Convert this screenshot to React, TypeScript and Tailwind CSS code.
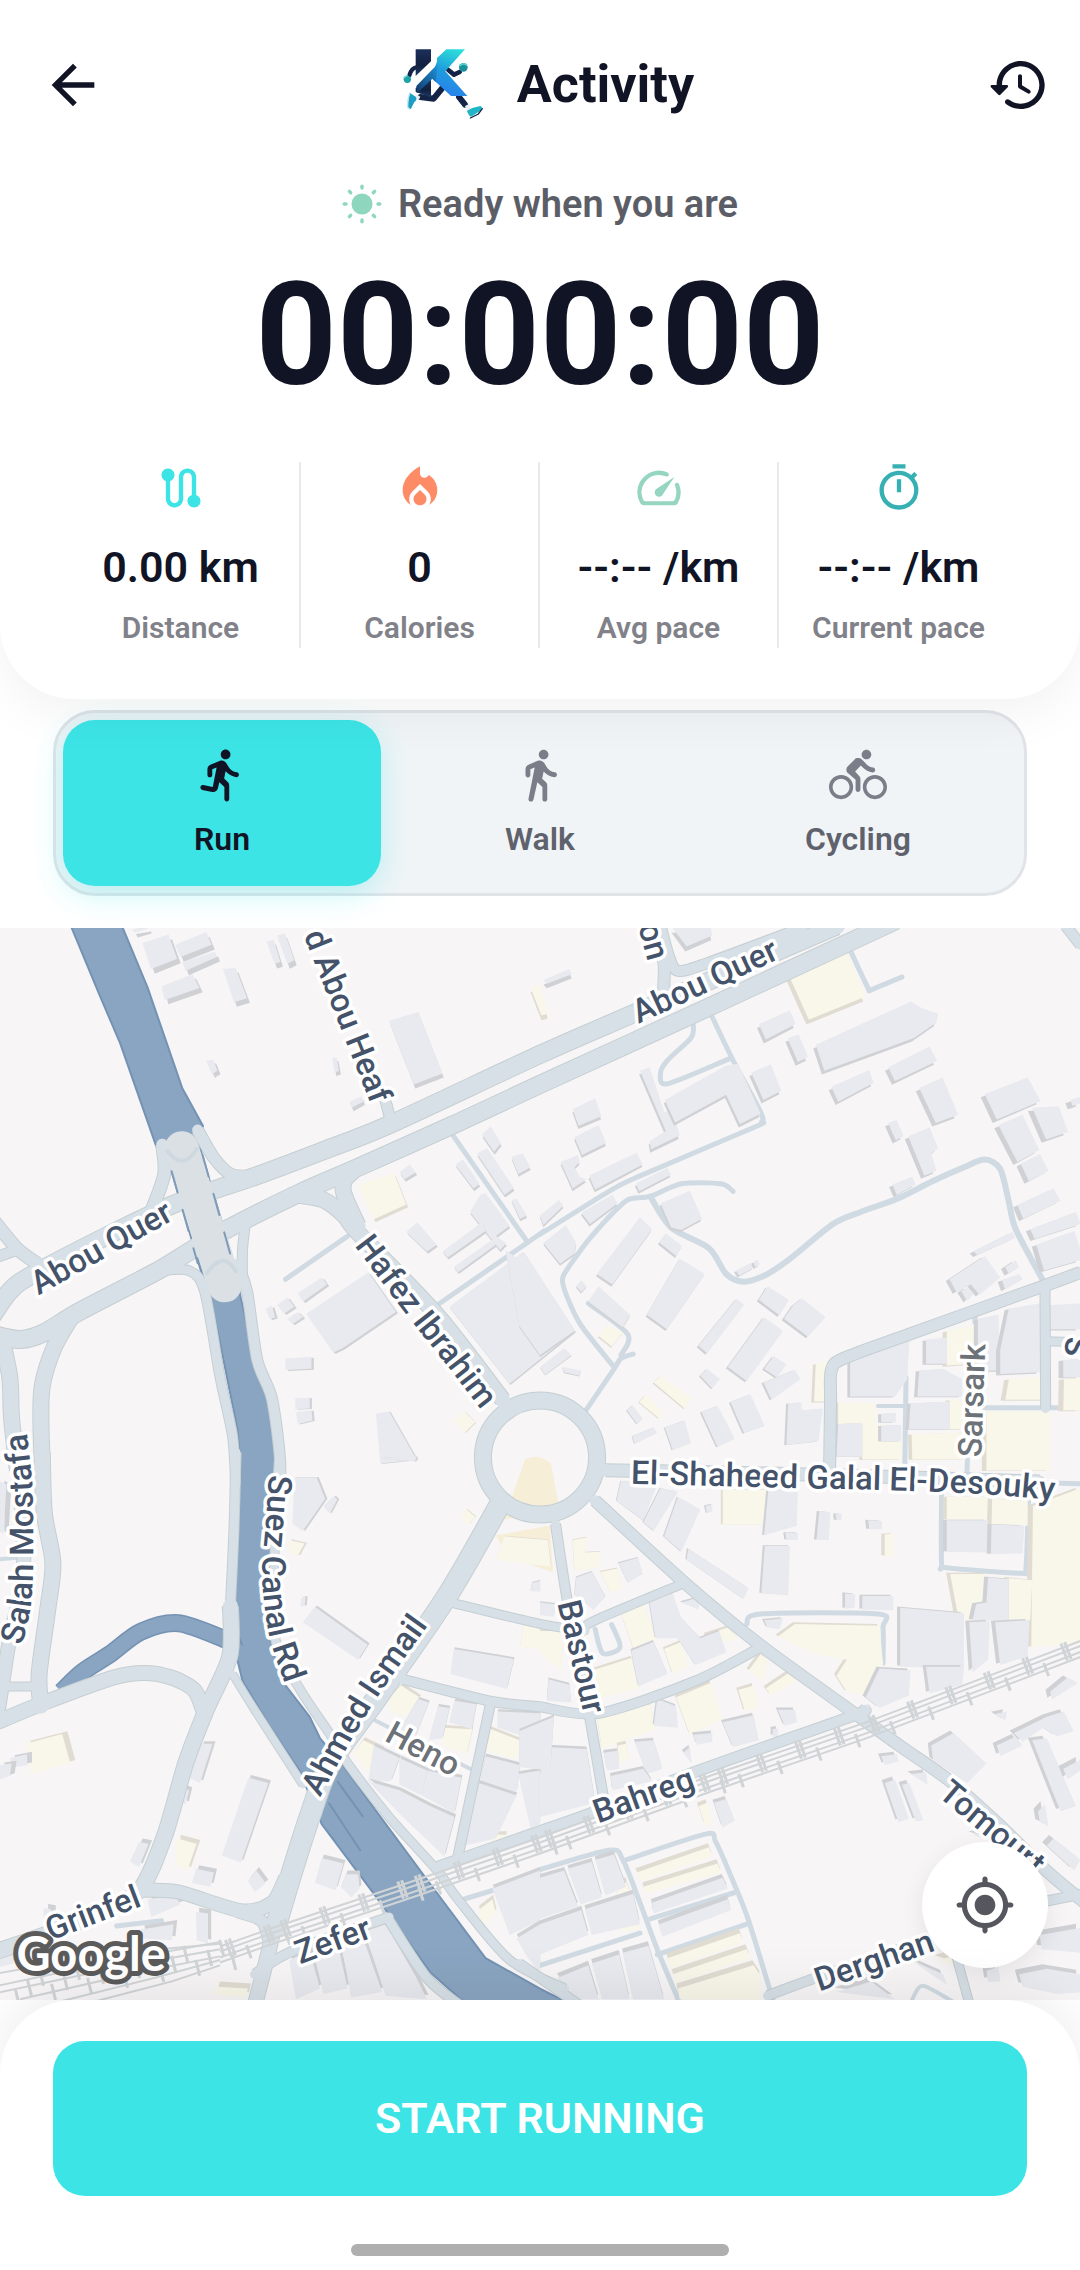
import React, { useState } from "react";
import { MdArrowBack, MdLocalFireDepartment, MdOutlineTimer, MdRoute } from "react-icons/md";

/* ---------- icons ---------- */

const glyphs = {
  history:
    "M13.26 3C8.17 2.86 4 6.95 4 12H2.21c-.45 0-.67.54-.35.85l2.79 2.8c.2.2.51.2.71 0l2.79-2.8c.31-.31.09-.85-.36-.85H6c0-3.9 3.18-7.05 7.1-7 3.72.05 6.85 3.18 6.9 6.9.05 3.91-3.1 7.1-7 7.1-1.61 0-3.1-.55-4.28-1.48-.4-.31-.96-.28-1.32.08-.42.42-.39 1.13.08 1.49C9 20.29 10.91 21 13 21c5.05 0 9.14-4.17 9-9.26-.13-4.69-4.05-8.61-8.74-8.74zm-.51 5c-.41 0-.75.34-.75.75v3.68c0 .35.19.68.49.86l3.12 1.85c.36.21.82.09 1.03-.26.21-.36.09-.82-.26-1.03l-2.88-1.71v-3.4c0-.4-.34-.74-.75-.74z",
  speed:
    "M19.46 10a1 1 0 0 0-.07 1 7.55 7.55 0 0 1 .52 1.81 8 8 0 0 1-.69 4.73 1 1 0 0 1-.89.53H5.68a1 1 0 0 1-.89-.54A8 8 0 0 1 13 6.06a7.69 7.69 0 0 1 2.11.56 1 1 0 0 0 1-.07 1 1 0 0 0-.17-1.76A10 10 0 0 0 3.35 19a2 2 0 0 0 1.72 1h13.85a2 2 0 0 0 1.74-1 10 10 0 0 0 .55-8.89 1 1 0 0 0-1.75-.11zM10.59 12.59a2 2 0 0 0 2.83 2.83l5.66-8.49z",
  locate:
    "M12 8c-2.21 0-4 1.79-4 4s1.79 4 4 4 4-1.79 4-4-1.79-4-4-4zm8.94 3c-.46-4.17-3.77-7.48-7.94-7.94V2c0-.55-.45-1-1-1s-1 .45-1 1v1.06C6.83 3.52 3.52 6.83 3.06 11H2c-.55 0-1 .45-1 1s.45 1 1 1h1.06c.46 4.17 3.77 7.48 7.94 7.94V22c0 .55.45 1 1 1s1-.45 1-1v-1.06c4.17-.46 7.48-3.77 7.94-7.94H22c.55 0 1-.45 1-1s-.45-1-1-1h-1.06zM12 19c-3.87 0-7-3.13-7-7s3.13-7 7-7 7 3.13 7 7-3.13 7-7 7z",
  run: "M13.49 5.48c1.1 0 2-.9 2-2s-.9-2-2-2-2 .9-2 2 .9 2 2 2zm-3.6 13.9l1-4.4 2.1 2v5c0 .55.45 1 1 1s1-.45 1-1v-5.64c0-.55-.22-1.07-.62-1.45l-1.48-1.41.6-3c1.07 1.24 2.62 2.13 4.36 2.41.6.09 1.14-.39 1.14-1 0-.49-.36-.9-.85-.98-1.52-.25-2.78-1.15-3.45-2.33l-1-1.6c-.4-.6-1-1-1.7-1-.3 0-.5.1-.8.1l-4 1.69c-.74.31-1.22 1.04-1.22 1.84v2.37c0 .55.45 1 1 1s1-.45 1-1v-2.4l1.8-.7-1.6 8.1-3.92-.8c-.54-.11-1.07.24-1.18.78v.04c-.11.54.24 1.07.78 1.18l4.11.82c1.06.21 2.1-.46 2.34-1.52z",
  walk: "M13.5 5.5c1.1 0 2-.9 2-2s-.9-2-2-2-2 .9-2 2 .9 2 2 2zM9.8 8.9L7.24 21.81c-.13.61.35 1.19.98 1.19h.08c.47 0 .87-.32.98-.78L10.9 15l2.1 2v5c0 .55.45 1 1 1s1-.45 1-1v-5.64c0-.55-.22-1.07-.62-1.45L12.9 13.5l.6-3c1.07 1.24 2.62 2.13 4.36 2.41.6.09 1.14-.39 1.14-1v-.03c0-.49-.36-.9-.84-.98-1.53-.25-2.79-1.16-3.46-2.33l-1-1.6c-.56-.89-1.68-1.25-2.66-.84L7.22 7.78C6.48 8.1 6 8.82 6 9.62V12c0 .55.45 1 1 1s1-.45 1-1V9.6l1.8-.7",
  cycle:
    "M15.5 5.5c1.1 0 2-.9 2-2s-.9-2-2-2-2 .9-2 2 .9 2 2 2zM5 12c-2.8 0-5 2.2-5 5s2.2 5 5 5 5-2.2 5-5-2.2-5-5-5zm0 8.5c-1.9 0-3.5-1.6-3.5-3.5s1.6-3.5 3.5-3.5 3.5 1.6 3.5 3.5-1.6 3.5-3.5 3.5zm5.8-10l2.4-2.4.8.8c1.06 1.06 2.38 1.78 3.96 2.02.6.09 1.14-.39 1.14-1 0-.49-.37-.91-.85-.99-1.11-.18-2.02-.71-2.75-1.43l-1.9-1.9c-.5-.4-1-.6-1.6-.6s-1.1.2-1.4.6L7.8 8.4c-.4.4-.6.9-.6 1.4 0 .6.2 1.1.6 1.4L11 14v4c0 .55.45 1 1 1s1-.45 1-1v-4.26c0-.55-.22-1.07-.62-1.45L10.8 10.5zM19 12c-2.8 0-5 2.2-5 5s2.2 5 5 5 5-2.2 5-5-2.2-5-5-5zm0 8.5c-1.9 0-3.5-1.6-3.5-3.5s1.6-3.5 3.5-3.5 3.5 1.6 3.5 3.5-1.6 3.5-3.5 3.5z",
};

function Glyph({ name, className }: { name: keyof typeof glyphs; className: string }) {
  return (
    <svg viewBox="0 0 24 24" fill="currentColor" aria-hidden="true" className={className}>
      <path d={glyphs[name]} />
    </svg>
  );
}

function Sun() {
  return (
    <svg viewBox="0 0 40 40" aria-hidden="true" className="size-10 text-[#8fd6bf]">
      <circle cx="20" cy="20" r="10.5" fill="currentColor" />
      {[0, 45, 90, 135, 180, 225, 270, 315].map((a) => (
        <path key={a} d="M20 2.2V4" stroke="currentColor" strokeWidth="3.4" strokeLinecap="round" transform={`rotate(${a} 20 20)`} />
      ))}
    </svg>
  );
}

function Logo() {
  return (
    <svg viewBox="36 31 276 276" role="img" aria-label="K runner logo" className="size-23">
      <defs>
        <linearGradient id="kStem" x1="0" y1="0" x2="0" y2="1">
          <stop offset="0" stopColor="#1b2f5a" />
          <stop offset="0.6" stopColor="#12203f" />
          <stop offset="1" stopColor="#1d3c68" />
        </linearGradient>
        <linearGradient id="kArm" gradientUnits="userSpaceOnUse" x1="220" y1="62" x2="170" y2="205">
          <stop offset="0" stopColor="#2ee0da" />
          <stop offset="0.5" stopColor="#1f9bdc" />
          <stop offset="1" stopColor="#2b7df0" />
        </linearGradient>
        <linearGradient id="kTail" gradientUnits="userSpaceOnUse" x1="95" y1="190" x2="165" y2="125">
          <stop offset="0" stopColor="#123a6b" />
          <stop offset="1" stopColor="#1d8fd6" />
        </linearGradient>
      </defs>
      <g fill="none" strokeLinecap="round" strokeLinejoin="round" stroke="#142447">
        <path d="M94 116 Q80 118 73 140" strokeWidth="13" />
        <path d="M190 124 L207 138 L224 130" strokeWidth="14" />
        <path d="M172 178 L146 210 L106 205" strokeWidth="18" />
        <path d="M222 205 L240 228" strokeWidth="18" />
      </g>
      <path d="M92 62H138V98L92 142Z" fill="url(#kStem)" />
      <path d="M92 178L138 150V206L92 190Z" fill="url(#kStem)" />
      <path d="M92 150L152 92V112L92 170Z" fill="#ffffff" />
      <path d="M156 98V88L184 62H240L181 128L247 202H198L142 150L150 116Z" fill="url(#kArm)" />
      <path d="M94 172L158 106L152 160L142 150L96 194Z" fill="url(#kTail)" />
      <circle cx="67" cy="152" r="11" fill="#1fa3a8" />
      <path d="M57 146L66 140" stroke="#7fe3de" strokeWidth="5" strokeLinecap="round" />
      <circle cx="235" cy="116" r="13" fill="#1b8f9c" />
      <path d="M226 110Q234 102 244 109" stroke="#52d5cf" strokeWidth="5" fill="none" strokeLinecap="round" />
      <path d="M94 197L106 204L101 214L88 210Z" fill="#e9eef3" />
      <path d="M74 192L92 204Q98 214 88 220L78 240Q66 244 68 228Z" fill="#1f9ec4" />
      <path d="M74 192Q66 214 68 236L74 242" stroke="#bfeaf4" strokeWidth="4" fill="none" />
      <path d="M240 232L252 226L258 238L246 246Z" fill="#e9eef3" />
      <path d="M246 246L262 238L286 232Q296 236 286 246L258 264Q250 260 246 246Z" fill="#1fb5c6" />
      <path d="M256 268L280 256L292 240" stroke="#142447" strokeWidth="4" fill="none" strokeLinecap="round" />
    </svg>
  );
}

/* ---------- map ---------- */

/* Map tiles: origin and scale of each tile's own units in map pixels. */
type Tile = "a" | "b" | "c" | "d";
const K = 540 / 1568;
const tiles: Record<Tile, [number, number, number, number]> = {
  a: [0, 920, K, K],
  b: [540, 920, K, K],
  c: [0, 1460, K, 1 / 2.8],
  d: [540, 1460, K, 1 / 2.8],
};

type Pt = [number, number];

function pts(tile: Tile, src: string): Pt[] {
  const [ox, oy, sx, sy] = tiles[tile];
  return src
    .trim()
    .split(/\s+/)
    .map((p) => {
      const [x, y] = p.split(",").map(Number);
      return [Math.round((ox + x * sx) * 10) / 10, Math.round((oy + y * sy) * 10) / 10];
    });
}

function line(p: Pt[]) {
  return "M" + p.map((q) => q.join(" ")).join("L");
}

/* Catmull-Rom spline through the points. */
function curve(p: Pt[]) {
  if (p.length < 3) return line(p);
  let d = `M${p[0][0]} ${p[0][1]}`;
  for (let i = 0; i < p.length - 1; i++) {
    const a = p[i - 1] ?? p[i];
    const b = p[i];
    const c = p[i + 1];
    const e = p[i + 2] ?? c;
    d += `C${b[0] + (c[0] - a[0]) / 7} ${b[1] + (c[1] - a[1]) / 7} ${c[0] - (e[0] - b[0]) / 7} ${c[1] - (e[1] - b[1]) / 7} ${c[0]} ${c[1]}`;
  }
  return d;
}

const roads: [Tile, number, string][] = [
  ["a", 17, "-20,1150 30,1080 90,1035 300,925 500,830 620,787 740,747 940,672 1130,597 1568,393 1850,270 2428,20"],
  ["a", 17, "-20,1205 60,1220 130,1200 230,1140 460,1020 550,965 650,905 870,795 1030,725 1310,600 1568,480 2070,250 2600,5"],
  ["a", 11, "575,612 620,690 670,740 740,747"],
  ["a", 12, "472,655 478,740 440,850"],
  ["a", 15, "860,800 940,815 1000,860 1040,910 1270,1150 1460,1395"],
  ["a", 15, "1030,728 1000,760 1000,800 1040,890"],
  ["a", 9, "715,870 705,960 705,1040"],
  ["a", 10, "690,1000 718,1080 748,1280 790,1390 814,1568 812,1700"],
  ["a", 9, "470,1020 550,1020 595,1080 640,1330 676,1500 685,1640"],
  ["a", 10, "1118,520 1135,585"],
  ["a", 12, "-20,870 50,955 110,1000"],
  ["a", 10, "-20,985 50,960"],
  ["a", 15, "8,1225 30,1330 35,1450 52,1600"],
  ["a", 15, "215,1145 160,1240 125,1350 120,1450 125,1600"],
  ["b", 10, "350,20 375,110 400,150 480,130 760,26"],
  ["b", 11, "340,60 360,130 358,215"],
  ["b", 11, "1568,1025 1460,1065 1070,1205 880,1275 845,1310 843,1400 840,1600"],
  ["b", 9, "1465,1060 1467,1420"],
  ["b", 8, "1467,1225 1580,1228"],
  ["b", 10, "1525,20 1568,75"],
  ["c", 15, "124,-20 130,150 155,290 140,420 115,600 120,690"],
  ["c", 13, "52,-20 70,300 30,500 10,620 -10,740"],
  ["c", 8, "20,635 110,635"],
  ["c", 14, "-20,740 130,680 330,610 420,597 500,610 565,645 590,700"],
  ["c", 9, "686,-20 680,200 670,410"],
  ["c", 15, "670,410 668,550 600,700 540,850 480,1050 410,1200 300,1265 130,1330 -20,1380"],
  ["c", 7, "676,600 740,700 880,910"],
  ["c", 8, "812,-20 800,200 800,500 870,640 960,770 1010,850 1130,1000 1270,1150 1330,1230 1480,1400 1640,1480"],
  ["c", 20, "1455,120 1300,380 1100,660 960,850 900,1000 850,1150 800,1310"],
  ["c", 14, "800,1290 780,1380 740,1530"],
  ["c", 13, "420,1205 520,1210 700,1262 790,1240 830,1170"],
  ["c", 11, "690,1265 760,1290 780,1340"],
  ["c", 8, "1310,400 1568,460 1700,480"],
  ["c", 9, "1170,615 1420,675 1568,692"],
  ["c", 9, "1425,680 1330,1110"],
  ["c", 10, "1270,1140 1568,1040 1728,985 2030,870 2468,720 2510,700"],
  ["c", 9, "1130,1290 1240,1450 1340,1530"],
  ["c", 9, "740,1440 850,1375 1130,1280"],
  ["d", 12, "190,30 700,40 1450,62"],
  ["d", 11, "160,115 420,345 640,520 920,715 1050,805 1190,900 1330,1020 1480,1160 1600,1255"],
  ["d", 9, "45,180 80,400 140,700 185,950"],
  ["d", 8, "420,345 160,450 120,478"],
  ["d", 9, "640,525 450,620 170,710 0,692"],
  ["d", 9, "1470,1235 1600,1210"],
  ["d", 9, "660,1500 800,1450 1180,1325"],
  ["d", 8, "1205,1380 1245,1520"],
  ["d", 9, "-60,1410 120,1530"],
];

const lanes: [Tile, number, string][] = [
  ["a", 5, "830,1045 1010,920"],
  ["a", 5, "1310,620 1530,935"],
  ["a", 5, "1270,1120 1530,940 1580,905"],
  ["b", 5, "500,285 560,410 640,560 643,588 620,605 290,745 200,790 0,915"],
  ["b", 5, "445,310 438,345 370,410 350,445 370,478 550,405"],
  ["b", 5, "895,80 925,145 955,208"],
  ["b", 5, "955,208 1050,168"],
  ["b", 5, "560,790 525,768 410,768 320,805 270,810 240,825 150,920 90,1000 65,1045 80,1100 120,1180 215,1300"],
  ["b", 6, "320,805 380,895 490,955 540,1030 590,1052 650,1035 720,990 850,885 930,850 1040,810 1140,760 1230,720 1290,698 1335,725 1360,820 1380,900 1460,1050"],
  ["b", 5, "270,1262 235,1275 215,1305 130,1430"],
  ["b", 5, "235,1265 255,1205 140,1115"],
  ["b", 5, "1290,1418 1580,1418"],
  ["b", 4, "980,1413 1055,1413"],
  ["b", 5, "1262,1150 1262,1170"],
  ["b", 5, "1062,1330 1058,1600"],
  ["b", 5, "1240,1568 1238,1620"],
  ["c", 4, "1090,730 1365,865"],
  ["c", 5, "1330,1235 1568,1165"],
  ["c", 5, "340,1305 470,1290"],
  ["c", 4, "-10,280 50,275"],
  ["d", 5, "1450,65 1580,68"],
  ["d", 4, "0,460 130,480"],
  ["d", 5, "160,475 182,542 232,525 208,462"],
  ["d", 5, "600,460 640,432 980,432 995,470 995,570"],
  ["d", 5, "1165,90 1165,290 1180,303 1395,318 1410,300 1417,110"],
  ["d", 5, "-10,1150 200,1093 240,1120 290,1240 340,1370 405,1520"],
  ["d", 5, "250,1120 480,1048 510,1070 560,1180 605,1290 675,1510"],
  ["d", 5, "320,1285 570,1210"],
  ["d", 5, "340,1385 600,1300"],
  ["d", 5, "0,1415 290,1325"],
  ["d", 4, "1080,1510 1110,1472 1195,1515"],
];

const greyBlocks: [Tile, string[]][] = [
  [
    "a",
    [
      "415,70 490,45 515,115 440,145", "510,75 600,38 615,75 525,110", "530,125 625,95 630,110 540,150", "470,195 560,160 580,200 480,235",
      "648,145 685,142 718,230 680,242", "775,65 795,60 815,125 798,130", "805,48 828,42 855,120 835,130", "385,30 430,22 430,28 390,40",
      "1130,295 1215,270 1285,448 1202,480", "600,412 620,408 632,440 616,450", "965,405 978,402 985,440 972,446", "1015,530 1050,515 1055,530 1022,548",
      "1400,625 1425,602 1455,650 1435,675", "1385,680 1415,665 1492,780 1465,800", "1485,690 1518,680 1540,720 1505,740", "1322,712 1345,698 1392,768 1375,782",
      "1160,735 1190,712 1208,735 1175,755", "1395,800 1410,796 1480,890 1440,920 1470,940 1452,960 1365,850", "1180,908 1212,880 1268,945 1240,965", "1285,965 1400,880 1410,905 1300,982",
      "1318,1010 1430,930 1440,945 1330,1025", "1485,815 1500,812 1530,860 1510,870", "865,1085 935,1040 950,1060 880,1110", "805,1120 835,1098 855,1125 825,1145",
      "835,1160 865,1140 880,1155 850,1175", "772,1130 790,1122 800,1155 783,1160", "890,1145 1070,1025 1150,1140 995,1245 968,1258", "1305,1125 1520,965 1670,1195 1480,1348",
      "830,1275 905,1270 905,1305 830,1308", "858,1390 900,1388 900,1420 858,1422", "860,1430 905,1425 908,1455 865,1465", "1092,1435 1130,1428 1210,1568 1105,1580",
    ],
  ],
  [
    "b",
    [
      "385,26 495,26 500,48 425,80", "10,178 85,145 92,160 20,188", "635,305 725,265 742,305 655,350", "718,345 750,335 778,400 748,415",
      "800,365 1075,240 1110,260 1155,275 1150,300 1085,345 825,440", "1010,430 1130,370 1152,412 1030,470", "845,487 955,438 968,475 865,530", "1100,490 1168,460 1213,568 1148,592",
      "613,445 670,422 700,498 648,525", "290,440 318,430 360,560 385,555 405,628 322,668 318,645 365,615", "362,525 540,425 575,420 640,565 580,595 540,510 392,590", "95,552 160,520 178,572 112,600",
      "100,632 170,598 192,650 122,685", "60,705 110,685 115,705 100,720 115,748 135,755 95,782", "142,745 280,678 298,712 160,785", "278,768 370,722 380,742 288,790",
      "0,860 55,815 68,832 10,888", "120,852 210,800 225,825 145,885", "10,940 75,888 105,940 100,970 58,1000", "350,825 435,788 470,870 410,902 380,895",
      "290,865 325,900 210,1060 165,1030", "345,938 365,912 412,948 395,978", "405,985 478,1030 368,1190 310,1148", "-100,960 0,1040 100,1195 0,1265 -60,1180",
      "105,1065 120,1048 135,1065 120,1082", "140,1110 170,1065 262,1150 240,1185", "570,1102 592,1120 485,1260 460,1238", "650,1155 705,1195 600,1340 545,1300",
      "660,1065 722,1105 695,1150 635,1105", "735,1120 760,1100 828,1155 778,1212 708,1160", "0,1300 70,1245 92,1265 15,1322", "65,1300 120,1310 115,1325 70,1315",
      "568,1020 610,998 620,1012 578,1035", "618,995 630,988 638,1002 625,1010", "650,1305 678,1268 715,1292 688,1330", "648,1345 740,1308 755,1335 672,1395",
      "465,1325 485,1305 522,1335 500,1362", "553,1402 610,1378 652,1470 592,1492", "468,1430 515,1412 565,1508 515,1532", "362,1475 420,1455 438,1520 385,1540",
      "252,1425 268,1410 298,1450 282,1465", "268,1500 330,1475 340,1490 275,1522", "720,1405 758,1402 760,1425 820,1420 808,1515 715,1525", "900,1270 1072,1215 1065,1335 1030,1385 900,1385",
      "1010,592 1035,583 1055,630 1032,642", "1068,630 1130,605 1155,665 1135,680 1150,730 1115,745", "1022,770 1080,748 1090,770 1035,800", "1290,508 1415,460 1452,528 1325,582",
      "1330,598 1400,568 1448,670 1385,705", "1395,710 1450,682 1475,730 1418,760", "1428,548 1505,543 1532,618 1468,640", "1385,830 1490,782 1510,818 1402,870",
      "1422,900 1555,850 1568,885 1435,928", "1440,945 1550,905 1568,960 1568,990 1462,1020", "1258,965 1370,908 1378,925 1268,975", "1188,1045 1290,978 1335,1040 1275,1090 1250,1060 1208,1082",
      "1350,1010 1380,990 1390,1010 1360,1030", "1340,1048 1390,1030 1400,1045 1350,1075", "1222,1080 1240,1068 1258,1088 1240,1108", "1270,1160 1330,1148 1335,1310 1270,1310",
      "1360,1130 1452,1115 1452,1315 1335,1320 1335,1250", "1120,1220 1180,1215 1180,1290 1120,1290", "1100,1310 1170,1305 1225,1335 1225,1385 1095,1385", "1075,1405 1188,1400 1188,1480 1070,1480",
      "990,1435 1032,1432 1032,1460 990,1460", "865,1465 935,1462 935,1560 860,1560", "990,1470 1048,1468 1048,1515 990,1515", "1480,1120 1568,1115 1568,1190 1478,1190",
      "1518,1280 1568,1275 1568,1330 1518,1330", "1538,525 1568,515 1568,535 1545,542",
    ],
  ],
  [
    "c",
    [
      "855,50 920,50 945,110 880,200 850,180", "940,130 970,102 980,112 958,152", "915,412 1068,518 1040,560 880,455", "875,388 888,385 885,412 873,410",
      "1318,530 1492,558 1472,642 1308,600", "1105,-5 1210,-8 1205,5", "585,795 618,795 582,905 548,890", "525,915 550,925 540,965 512,950",
      "722,890 780,905 700,1128 645,1108", "405,1070 432,1075 405,1140 378,1125", "570,1145 622,1155 612,1195 558,1185", "720,1180 745,1150 772,1185 742,1210",
      "935,1115 998,1130 975,1205 915,1185", "1005,1160 1040,1160 1045,1200 1020,1225 990,1195", "430,1230 510,1220 525,1245 440,1280", "570,1265 605,1270 605,1355 572,1345",
      "410,1315 505,1300 500,1345 415,1340", "30,835 80,825 80,855 35,862", "0,855 35,850 30,885 0,895", "1215,670 1245,680 1200,790 1160,760",
      "1272,690 1305,695 1285,780 1245,785", "1320,675 1383,685 1370,755 1305,735", "1085,800 1160,835 1135,900 1070,900", "1160,835 1240,870 1225,940 1160,910", "1240,870 1340,890 1320,990 1225,940",
      "1070,900 1160,925 1250,970 1320,1000 1290,1110 1160,990", "1445,705 1568,710 1568,790 1445,750",
      "1410,830 1510,855 1500,930 1395,900", "1390,905 1500,940 1440,1060 1350,1080 1370,960", "1505,880 1568,870 1568,1020 1540,1030", "1430,1200 1568,1150 1568,1290 1480,1330", "1500,1340 1568,1300 1568,1440 1530,1390",
      "840,1400 900,1375 930,1480 860,1510", "910,1375 980,1350 1010,1480 940,1495", "990,1345 1050,1325 1110,1490 1020,1505", "1060,1320 1120,1300 1210,1450 1240,1510 1120,1500",
      "0,60 20,70 12,210 0,200", "128,1255 150,1258 150,1285 128,1285", "0,1390 40,1380 40,1410 0,1420", "1545,345 1568,340 1568,370 1540,368",
    ],
  ],
  [
    "d",
    [
      "235,60 340,70 300,170 222,115", "350,80 400,90 330,200 300,175", "400,105 465,140 410,258 360,215", "665,60 748,80 745,185 650,212", "810,145 842,148 838,225 802,225",
      "712,205 748,205 748,225 715,225", "480,130 500,125 500,145 485,150", "858,152 875,152 875,170 860,170", "952,170 992,172 992,195 955,195",
      "652,242 725,242 720,380 642,375", "430,250 605,360 590,390 425,280", "105,330 150,315 190,385 155,420 100,380", "228,290 285,275 298,320 255,345",
      "315,385 385,375 410,445 465,500 520,480 540,540 450,575 400,500 335,500", "265,535 330,510 370,600 285,635", "410,400 465,385 460,420", "1180,170 1300,170 1300,260 1180,258",
      "1310,182 1405,185 1400,262 1308,265", "1300,330 1360,335 1360,450 1255,450 1265,405 1295,400", "1045,415 1230,430 1230,585 1045,580", "985,585 1075,590 1070,660 985,695 945,665",
      "1120,580 1230,580 1225,630 1130,655", "1245,455 1305,452 1300,560 1255,595", "1320,455 1420,450 1415,550 1335,575", "885,375 915,378 912,415 885,418",
      "935,382 1025,382 1025,422 935,420", "650,450 705,445 695,475 660,470", "25,615 85,630 90,680 20,675", "340,670 395,690 400,750 330,745",
      "530,735 620,715 635,785 560,805", "690,700 740,700 745,735 710,745", "675,755 690,752 692,778 675,775", "445,770 500,765 500,790 455,798",
      "275,790 330,785 355,865 310,880", "185,820 225,815 230,865 195,870", "205,885 300,865 325,900 210,925", "415,820 435,805 440,850",
      "25,805 135,810 160,960 0,1000 0,880", "-60,760 40,720 30,870 -60,860", "505,960 540,950 565,1010 530,1030", "1135,800 1200,765 1295,850 1240,905 1140,840",
      "1320,712 1355,705 1350,730", "1480,650 1530,610 1560,625 1485,672", "1325,800 1380,775 1400,800 1335,830", "1375,765 1470,720 1520,705 1548,760 1500,775 1460,750 1400,790",
      "1428,785 1470,780 1555,970 1510,985", "1518,865 1568,840 1568,870 1530,895", "1000,905 1030,895 1070,1005 1040,1015", "1050,910 1072,905 1112,1010 1090,1012",
      "1075,880 1120,875 1125,910", "990,830 1035,825 1040,845 1000,855", "1445,985 1465,965 1475,1025 1450,1015", "1470,1080 1490,1060 1568,1120 1550,1150",
      "1255,1050 1275,1045 1290,1060", "1450,1330 1568,1310 1568,1380 1455,1370", "1390,1440 1470,1425 1568,1440 1568,1490 1500,1495 1400,1475", "1295,1430 1330,1420 1335,1460 1300,1462",
      "0,1170 70,1150 110,1250 0,1285", "80,1145 150,1125 180,1225 118,1245", "160,1120 215,1105 250,1195 190,1220", "0,1300 120,1260 140,1330 0,1385", "130,1258 270,1215 290,1300 150,1330",
      "50,1450 140,1415 170,1510 90,1510", "150,1410 230,1385 260,1510 180,1510", "240,1380 315,1360 360,1510 270,1510", "325,1240 530,1170 545,1200 330,1270", "345,1300 545,1230 555,1260 355,1335",
      "860,1490 960,1460 1030,1510", "1075,1400 1170,1440 1180,1470", "0,400 45,405 40,440 0,435",
    ],
  ],
];

const creamBlocks: [Tile, string[]][] = [
  ["a", ["1040,770 1145,738 1180,828 1085,872", "1315,1455 1350,1430 1380,1460 1350,1490", "1540,198 1568,190 1590,275 1572,280"]],
  [
    "b",
    [
      "715,148 885,85 945,225 780,292", "170,1210 195,1178 240,1200 208,1240", "330,1345 350,1325 440,1390 420,1420", "288,1402 305,1380 358,1430 345,1448",
      "800,1290 845,1280 843,1400 795,1400", "865,1402 975,1405 975,1465 1048,1470 1048,1568 935,1568 935,1465 865,1465", "1180,1195 1262,1180 1262,1290 1180,1295", "1188,1395 1230,1395 1230,1480 1188,1480",
      "1078,1495 1235,1490 1235,1568 1080,1568", "1360,1335 1480,1325 1480,1395 1350,1395", "1295,1428 1480,1428 1480,1600 1295,1600", "1520,1335 1568,1330 1568,1425 1518,1425",
    ],
  ],
  [
    "c",
    [
      "75,795 182,768 205,848 92,880", "515,1060 572,1075 545,1150 510,1130", "1335,160 1355,140 1380,160 1360,182", "1140,655 1165,632 1218,665 1180,720 1125,700",
      "1055,785 1110,810 1065,875 1028,820", "1290,750 1372,755 1355,825 1285,800", "1415,750 1520,790 1500,840 1400,810", "1520,460 1568,460 1568,530 1510,525",
      "840,225 885,235 865,270 840,260", "1430,1050 1470,1050 1465,1080 1425,1075", "1390,1260 1430,1230 1440,1270 1395,1310", "1455,1275 1490,1265 1505,1310 1480,1330",
      "630,1475 720,1480 715,1505 625,1495", "1465,215 1590,225 1600,300 1440,280",
    ],
  ],
  [
    "d",
    [
      "530,85 660,85 655,182 530,182", "95,225 135,218 130,260 175,258 175,300 100,312", "175,315 225,305 240,360 205,372", "235,430 300,405 340,505 275,540",
      "360,530 410,510 430,580 385,600", "150,590 265,555 290,640 165,670", "480,490 545,470 575,500 490,525", "0,480 70,480 60,590 0,540",
      "395,665 495,625 530,725 435,770", "165,720 320,685 335,755 180,810", "605,590 640,545 660,560 650,620", "655,640 720,598 745,620 670,660",
      "575,645 620,632 635,690 595,705", "690,495 740,460 985,465 995,570 985,640 970,662 890,650 860,605 890,560 800,545", "1180,105 1300,105 1300,168 1180,168", "1312,110 1415,115 1415,185 1310,182",
      "1430,130 1568,80 1568,515 1425,525", "1190,320 1300,320 1295,400 1265,405 1255,450 1215,450", "1360,332 1428,338 1422,450 1360,450", "1000,210 1028,208 1028,272 1000,270",
      "280,1155 490,1085 500,1110 290,1180", "300,1195 515,1130 525,1155 305,1215", "370,1395 580,1325 590,1350 380,1425", "385,1440 600,1370 610,1395 395,1465",
      "400,1480 620,1415 640,1445 640,1510 405,1510", "220,1195 250,1180 262,1215 225,1225", "230,1290 285,1270 290,1315 235,1320", "460,970 485,960 500,1015 480,1025",
      "1155,1400 1195,1390 1215,1420", "225,800 250,795 260,840 230,850",
    ],
  ],
];

/* Roofs lean outwards from the map's centre, so walls show on the inner side. */
function Blocks({ groups, roof, wall, lean }: { groups: [Tile, string[]][]; roof: string; wall: string; lean: number }) {
  return (
    <>
      {groups.flatMap(([tile, list]) =>
        list.map((src) => {
          const p = pts(tile, src);
          const dx = (540 - p[0][0]) * lean;
          const dy = (1465 - p[0][1]) * lean;
          const d = line(p) + "Z";
          return (
            <g key={tile + src}>
              <path d={d} fill={wall} transform={`translate(${dx.toFixed(1)} ${dy.toFixed(1)})`} />
              <path d={d} fill={roof} />
            </g>
          );
        }),
      )}
    </>
  );
}

const canal =
  line([
    ...pts("a", "207,20 290,220 350,360 455,660 500,735 590,1040 615,1110 660,1330 690,1480"),
    ...pts(
      "c",
      "697,-10 690,150 683,405 690,560 705,620 780,740 870,870 935,1020 1090,1220 1250,1435 1350,1520 1650,1520 1568,1480 1410,1395 1240,1175 1090,980 1000,860 930,780 900,720 820,620 790,520 795,330 802,-10",
    ),
    ...pts("a", "785,1400 750,1310 700,1100 680,1000 585,675 590,600 530,490 430,200 355,20"),
  ]) + "Z";

const branch = curve(pts("c", "180,650 240,595 320,545 410,482 520,458 660,505"));

const railAxis = pts("c", "640,1385 800,1330 1190,1205 1568,1080 2068,905 2508,760 3150,525");
const yardAxes = ["-20,1475 350,1400 640,1350", "-20,1495 350,1420 640,1370", "60,1510 400,1435 640,1390", "180,1515 450,1450 640,1400", "280,1515 500,1460 640,1415", "-20,1440 300,1385 640,1355"].map((s) => line(pts("c", s)));

function Rails() {
  const ties: React.ReactNode[] = [];
  for (let i = 0; i < railAxis.length - 1; i++) {
    const [x1, y1] = railAxis[i];
    const [x2, y2] = railAxis[i + 1];
    const len = Math.hypot(x2 - x1, y2 - y1);
    const ux = (x2 - x1) / len;
    const uy = (y2 - y1) / len;
    for (let s = 14; s < len; s += 41) {
      [-4, 0, 14].forEach((o, k) => {
        const x = x1 + ux * (s + o);
        const y = y1 + uy * (s + o);
        const a = k === 2 ? 0 : -12;
        const b = k === 2 ? 14 : 6;
        ties.push(<path key={`${i}-${s}-${k}`} d={`M${x - uy * a} ${y + ux * a}L${x - uy * b} ${y + ux * b}`} />);
      });
    }
  }
  return (
    <g fill="none" stroke="#d0d4d6" strokeWidth="2">
      {[-8, -3, 3, 8].map((o) => (
        <path key={o} d={line(railAxis)} transform={`translate(0 ${o})`} />
      ))}
      {yardAxes.map((d) => (
        <path key={d} d={d} />
      ))}
      {Array.from({ length: 19 }, (_, i) => (
        <path key={i} d={`M${16 + i * 12} ${1990 - i * 2 - (i % 3) * 8}l4 16`} strokeWidth="3" />
      ))}
      <g strokeWidth="3">{ties}</g>
    </g>
  );
}

const labels: { id: string; text: string; d: string; grey?: boolean; end?: boolean }[] = [
  { id: "heaf", text: "d Abou Heaf", d: line(pts("a", "840,-60 915,130 1078,540")), end: true },
  { id: "quer-w", text: "Abou Quer", d: line(pts("a", "113,1092 300,987 560,842")) },
  { id: "hafez", text: "Hafez Ibrahim", d: curve(pts("a", "1030,948 1190,1160 1300,1298 1490,1545")) },
  { id: "on", text: "on", d: line(pts("b", "270,-30 313,125")), end: true },
  { id: "quer-e", text: "Abou Quer", d: line(pts("b", "286,304 480,215 780,75")) },
  { id: "sarsark", text: "Sarsark", d: line(pts("b", "1280,1562 1294,1180")), grey: true },
  { id: "s-edge", text: "S", d: line(pts("b", "1588,1275 1598,1180")) },
  { id: "shaheed", text: "El-Shaheed Galal El-Desouky", d: curve(pts("d", "264,68 740,80 1010,86 1300,98 1560,120")) },
  { id: "salah", text: "Salah Mostafa", d: curve(pts("c", "66,520 92,400 98,250 94,60 76,-100 70,-190")) },
  { id: "suez", text: "Suez Canal Rd", d: curve(pts("c", "782,42 772,180 762,330 782,490 832,640 860,730")) },
  { id: "ismail", text: "Ahmed Ismail", d: curve(pts("c", "930,945 1030,770 1110,645 1290,400")) },
  { id: "heno", text: "Heno", d: line(pts("c", "1114,785 1360,912")), grey: true },
  { id: "bastour", text: "Bastour", d: line(pts("d", "50,402 90,560 145,790")) },
  { id: "bahreg", text: "Bahreg", d: line(pts("d", "168,1018 560,882")) },
  { id: "tomourt", text: "Tomourt", d: line(pts("d", "1152,940 1500,1222")) },
  { id: "derghan", text: "Derghan", d: line(pts("d", "810,1488 1220,1350")) },
  { id: "grinfel", text: "Grinfel", d: line(pts("c", "148,1346 520,1210")) },
  { id: "zefer", text: "Zefer", d: line(pts("c", "872,1412 1200,1295")) },
];

function MapView() {
  const roadPaths = roads.map(([t, w, s]) => ({ w, d: curve(pts(t, s)) }));
  const lanePaths = lanes.map(([t, w, s]) => ({ w, d: curve(pts(t, s)) }));
  return (
    <svg viewBox="0 929 1080 1071" preserveAspectRatio="xMidYMid slice" role="img" aria-label="Street map" className="absolute inset-0 size-full">
      <defs>
        {labels.map((l) => (
          <path key={l.id} id={`label-${l.id}`} d={l.d} />
        ))}
      </defs>
      <rect x="0" y="929" width="1080" height="1071" fill="#f7f5f6" />
      <path d={canal} fill="#8aa5c1" stroke="#7492b3" strokeWidth="2" />
      <g fill="none">
        <path d={branch} stroke="#7492b3" strokeWidth="18" />
        <path d={branch} stroke="#8aa5c1" strokeWidth="15" />
      </g>
      <g stroke="#7492b3" strokeWidth="2">
        <path d={line(pts("c", "980,900 1055,1000"))} />
        <path d={line(pts("c", "955,960 1048,1095"))} />
        <path d={line(pts("c", "705,520 690,490"))} />
      </g>
      <path d="M504 1520L525 1460Q539 1453 551 1464L560 1512Z" fill="#f7eed8" />
      <path d="M496 1536L550 1526L553 1573L508 1557Z" fill="#f7eed8" />
      <g fill="none" strokeLinejoin="round" strokeLinecap="round" stroke="#d0dae2">
        {lanePaths.map((r) => (
          <path key={r.d} d={r.d} strokeWidth={r.w} />
        ))}
      </g>
      <Blocks groups={creamBlocks} roof="#f9f6ea" wall="#e0dcd2" lean={0.01} />
      <Blocks groups={greyBlocks} roof="#e8eaef" wall="#d0d1d4" lean={0.009} />
      <g fill="none" strokeLinejoin="round" stroke="#c5cfd3">
        {roadPaths.map((r) => (
          <path key={r.d} d={r.d} strokeWidth={r.w + 2} />
        ))}
        <circle cx="540" cy="1458" r="57" strokeWidth="18" />
      </g>
      <g fill="none" strokeLinejoin="round" strokeLinecap="round" stroke="#d7e0e6">
        {roadPaths.map((r) => (
          <path key={r.d} d={r.d} strokeWidth={r.w} />
        ))}
        <circle cx="540" cy="1458" r="57" strokeWidth="16" />
      </g>
      <g fill="none" strokeLinecap="round">
        <path d="M182 1149L225 1286" stroke="#dbe0e5" strokeWidth="34" />
        <path d="M168 1152Q183 1172 197 1150M207 1274Q224 1250 236 1272" stroke="#ced9df" strokeWidth="4" />
        <path d="M172 1172L198 1264M203 1156L232 1260" stroke="#7f9bb9" strokeWidth="2" strokeDasharray="22 18" />
      </g>
      <Rails />
      <g fontFamily="Roboto, sans-serif" fontSize="33" fontWeight="500" strokeLinejoin="round" strokeWidth="7" stroke="#ffffff" paintOrder="stroke">
        {labels.map((l) => (
          <text key={l.id} fill={l.grey ? "#6d7278" : "#44536a"} textAnchor={l.end ? "end" : "start"}>
            <textPath href={`#label-${l.id}`} startOffset={l.end ? "100%" : "0%"}>
              {l.text}
            </textPath>
          </text>
        ))}
      </g>
      <text x="17" y="1971" fontFamily="Lato, sans-serif" fontSize="47" fontWeight="700" fill="#ffffff" stroke="#5b5b5b" strokeWidth="10" strokeLinejoin="round" paintOrder="stroke">
        Google
      </text>
    </svg>
  );
}

/* ---------- screen ---------- */

const stats = [
  { label: "Distance", value: "0.00 km", icon: <MdRoute className="size-13 text-[#3ce4e6]" aria-hidden="true" /> },
  { label: "Calories", value: "0", icon: <MdLocalFireDepartment className="size-13 text-[#fd8b66]" aria-hidden="true" /> },
  { label: "Avg pace", value: "--:-- /km", icon: <Glyph name="speed" className="size-13 text-[#96d5c1]" /> },
  { label: "Current pace", value: "--:-- /km", icon: <MdOutlineTimer className="size-13 text-[#37b0b3]" aria-hidden="true" /> },
];

const modes = [
  { id: "run", label: "Run", action: "START RUNNING" },
  { id: "walk", label: "Walk", action: "START WALKING" },
  { id: "cycle", label: "Cycling", action: "START CYCLING" },
] as const;

export default function App() {
  const [mode, setMode] = useState<(typeof modes)[number]["id"]>("run");
  const current = modes.find((m) => m.id === mode)!;

  return (
    <main className="flex min-h-screen flex-col bg-white font-[Roboto,sans-serif] text-[#111425]">
      <section className="relative rounded-b-[74px] bg-white px-[62px] pb-[51px] shadow-[0_16px_50px_rgba(0,0,0,0.05)]">
        <header className="-mr-8 -ml-[21px] flex h-[170px] items-center justify-between">
          <button type="button" aria-label="Back">
            <MdArrowBack className="size-16" aria-hidden="true" />
          </button>
          <div className="flex items-center gap-7">
            <Logo />
            <h1 className="text-[52px] leading-none font-bold">Activity</h1>
          </div>
          <button type="button" aria-label="History">
            <Glyph name="history" className="size-16" />
          </button>
        </header>

        <p className="flex h-[68px] items-center justify-center gap-4 text-[38px] font-semibold text-[#5c5e67]">
          <Sun />
          Ready when you are
        </p>
        <p className="mt-4 text-center text-[142px] leading-[164px] font-bold">00:00:00</p>

        <dl className="mt-11 grid grid-cols-4 divide-x-2 divide-[#e9eaec]">
          {stats.map((s) => (
            <div key={s.label} className="flex h-[186px] flex-col items-center whitespace-nowrap">
              {s.icon}
              <dt className="order-last mt-[18px] text-[30px] leading-9 font-semibold text-[#818289]">{s.label}</dt>
              <dd className="mt-7 text-[43px] leading-[50px] font-semibold">{s.value}</dd>
            </div>
          ))}
        </dl>
      </section>

      <div role="group" aria-label="Activity type" className="mx-[53px] mt-[11px] mb-8 flex rounded-[42px] border-3 border-[#e0e4e8] bg-[#f0f4f7] p-[7px]">
        {modes.map((m) => (
          <button
            key={m.id}
            type="button"
            aria-pressed={m.id === mode}
            onClick={() => setMode(m.id)}
            className={
              m.id === mode
                ? "flex h-[166px] flex-1 flex-col items-center rounded-[32px] bg-[#3ce4e6] pt-[26px] text-[#111425] shadow-[0_8px_30px_rgba(60,228,230,0.3)]"
                : "flex h-[166px] flex-1 flex-col items-center rounded-[32px] pt-[26px] text-[#5f626d]"
            }
          >
            <Glyph name={m.id} className={m.id === mode ? "size-[58px]" : "size-[58px] text-[#7b7e88]"} />
            <span className="mt-[17px] text-[32px] leading-9 font-semibold">{m.label}</span>
          </button>
        ))}
      </div>

      <div className="relative min-h-[900px] flex-1 overflow-hidden">
        <MapView />
        <button
          type="button"
          aria-label="Center on my location"
          className="absolute right-8 bottom-8 flex size-[126px] items-center justify-center rounded-full bg-white text-[#56565f] shadow-[0_6px_24px_rgba(0,0,0,0.08)]"
        >
          <Glyph name="locate" className="size-[62px]" />
        </button>
      </div>

      <footer className="relative flex flex-col items-center rounded-t-[74px] bg-white px-[53px] pt-[41px] pb-[14px] shadow-[0_-12px_50px_rgba(0,0,0,0.07)]">
        <button type="button" className="h-[155px] w-full rounded-[32px] bg-[#3ce4e6] text-[43px] font-semibold text-white">
          {current.action}
        </button>
        <div className="mt-12 h-3 w-[378px] rounded-full bg-[#afafaf]" />
      </footer>
    </main>
  );
}
